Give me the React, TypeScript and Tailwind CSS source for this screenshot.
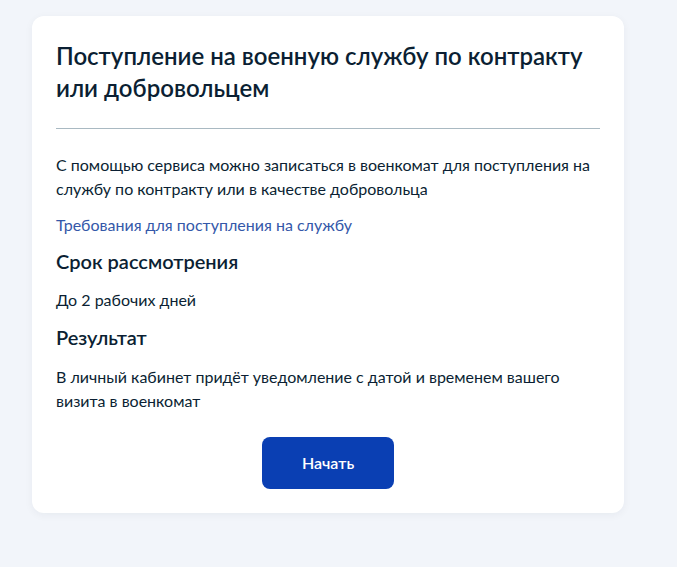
export default function App() {
  return (
    <div className="min-h-[567px] w-full bg-[#f2f5fa] px-8 pt-4 pb-12" style={{ fontFamily: 'Lato, "Open Sans", sans-serif' }}>
      <div className="w-[592px] rounded-xl bg-white px-6 pt-6 pb-6 shadow-[0_2px_8px_rgba(11,31,51,0.05)]">
        <h1 className="text-[24px] leading-[32px] font-semibold text-[#0b1f33]">
          Поступление на военную службу по контракту или добровольцем
        </h1>
        <div className="mt-6 h-px bg-[#a9b9c2]" />
        <p className="mt-6 text-[16px] leading-[24px] text-[#0b1f33]">
          С помощью сервиса можно записаться в военкомат для поступления на службу по контракту или в качестве добровольца
        </p>
        <a className="mt-3 block text-[16px] leading-[24px] text-[#3458a9]">Требования для поступления на службу</a>
        <h2 className="mt-[10px] text-[20px] leading-[28px] font-semibold text-[#0b1f33]">Срок рассмотрения</h2>
        <p className="mt-[13px] text-[16px] leading-[24px] text-[#0b1f33]">До 2 рабочих дней</p>
        <h2 className="mt-[11px] text-[20px] leading-[28px] font-semibold text-[#0b1f33]">Результат</h2>
        <p className="mt-[14px] text-[16px] leading-[24px] text-[#0b1f33]">
          В личный кабинет придёт уведомление с датой и временем вашего визита в военкомат
        </p>
        <div className="mt-6 flex justify-center">
          <button className="h-[52px] w-[132px] rounded-lg bg-[#0a3fb3] text-[16px] font-semibold text-white">Начать</button>
        </div>
      </div>
    </div>
  );
}
